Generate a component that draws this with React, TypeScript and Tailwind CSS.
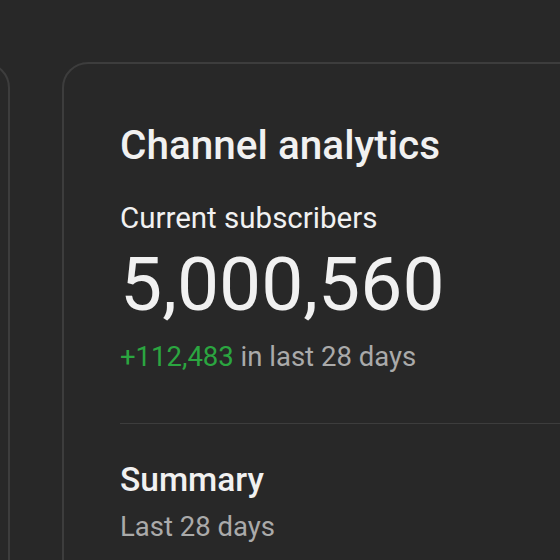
export default function App() {
  return (
    <div
      className="w-[560px] h-[560px] overflow-hidden bg-[#282828] text-white flex items-start gap-[52px] pt-[62px]"
      style={{ fontFamily: 'Roboto, "Liberation Sans", sans-serif' }}
    >
      {/* previous card, mostly off-screen */}
      <div className="w-[200px] h-[600px] ml-[-190px] shrink-0 rounded-[26px] border-2 border-[#3d3d3d]" />

      {/* channel analytics card */}
      <div className="w-[640px] h-[600px] shrink-0 rounded-[26px] border-2 border-[#3d3d3d] pt-[57px] pl-[56px]">
        <h2 className="text-[40.5px] leading-[48px] font-medium text-[#f1f1f1]">Channel analytics</h2>

        <div className="mt-[31px] text-[29.5px] leading-[36px] text-[#f1f1f1]">Current subscribers</div>
        <div className="mt-[8px] text-[75px] leading-[80px] text-[#f1f1f1]">5,000,560</div>
        <div className="mt-[17px] text-[27.5px] leading-[32px] text-[#aaaaaa]">
          <span className="text-[#2ba640]">+112,483</span> in last 28 days
        </div>

        <div className="mt-[50px] h-px bg-[#3d3d3d]" />

        <div className="mt-[38px] text-[33.5px] leading-[36px] font-medium text-[#f1f1f1]">Summary</div>
        <div className="mt-[13px] text-[27.5px] leading-[32px] text-[#aaaaaa]">Last 28 days</div>
      </div>
    </div>
  );
}
